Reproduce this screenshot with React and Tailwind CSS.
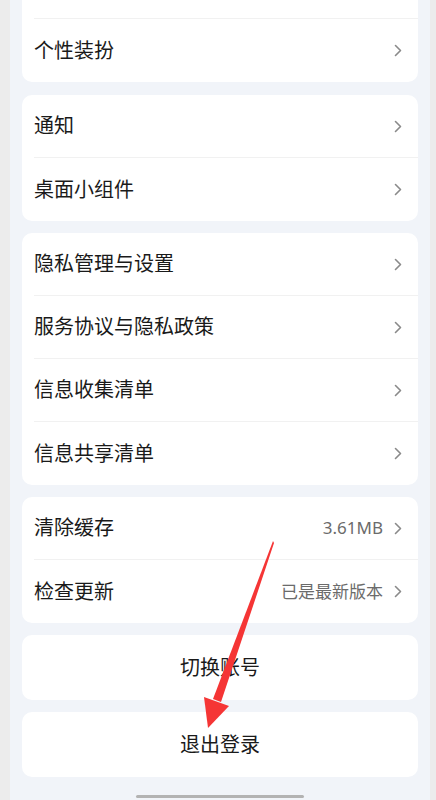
import React from "react";

const Chevron = () => (
  <svg width="8" height="13" viewBox="0 0 8 13" className="shrink-0">
    <polyline points="1.5,1.5 6.5,6.5 1.5,11.5" fill="none" stroke="#8a8a8a" strokeWidth="1.6" strokeLinecap="round" strokeLinejoin="round" />
  </svg>
);

const Row = ({ label, value, last }) => (
  <div className="pl-3">
    <div className={"h-[63px] flex items-center pr-4 " + (last ? "" : "border-b border-[#f1f1f1]")}>
      <span className="flex-1 text-[20px] text-[#1a1a1a]">{label}</span>
      {value && <span className="text-[17px] text-[#6b6b6b] mr-[11px]">{value}</span>}
      <Chevron />
    </div>
  </div>
);

const Card = ({ children, className = "" }) => (
  <div className={"bg-white rounded-[10px] overflow-hidden " + className}>{children}</div>
);

export default function App() {
  return (
    <div
      className="relative w-[436px] h-[800px] overflow-hidden flex bg-[#ededed]"
      style={{ fontFamily: '"Noto Sans", "Noto Sans CJK SC", sans-serif' }}
    >
      <div className="w-[10px] shrink-0 bg-[#ececec]" />
      <div className="w-[420px] shrink-0 bg-[#f1f4f9] px-3 flex flex-col">
        <Card className="-mt-[44px]">
          <div className="pl-3">
            <div className="h-[63px] border-b border-[#f1f1f1]" />
          </div>
          <Row label="个性装扮" last />
        </Card>
        <Card className="mt-[13px]">
          <Row label="通知" />
          <Row label="桌面小组件" last />
        </Card>
        <Card className="mt-[12px]">
          <Row label="隐私管理与设置" />
          <Row label="服务协议与隐私政策" />
          <Row label="信息收集清单" />
          <Row label="信息共享清单" last />
        </Card>
        <Card className="mt-[12px]">
          <Row label="清除缓存" value="3.61MB" />
          <Row label="检查更新" value="已是最新版本" last />
        </Card>
        <Card className="mt-[12px] h-[65px] flex items-center justify-center">
          <span className="text-[20px] text-[#1a1a1a]">切换账号</span>
        </Card>
        <Card className="mt-[12px] h-[65px] flex items-center justify-center">
          <span className="text-[20px] text-[#1a1a1a]">退出登录</span>
        </Card>
        <div className="mt-[18px] mx-auto w-[168px] h-[3px] rounded-full bg-[#b3b3b3]" />
      </div>
      <div className="flex-1 bg-[#ececec]" />
      <svg className="absolute left-0 top-0 pointer-events-none" width="436" height="800" viewBox="0 0 436 800">
        <polygon points="273,541 274,543 221,702 213,699" fill="#f53535" />
        <polygon points="204,697 229,706 208,728" fill="#f53535" />
      </svg>
    </div>
  );
}
